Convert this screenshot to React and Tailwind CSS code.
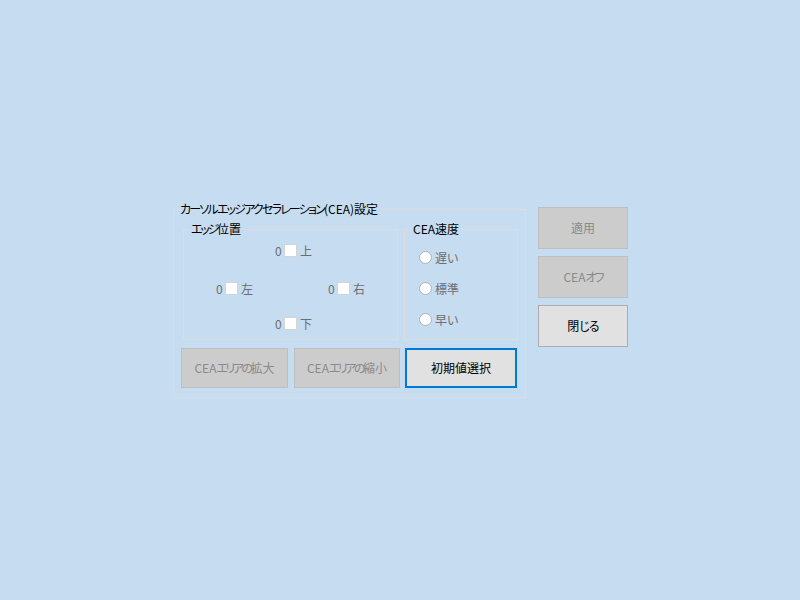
import React from "react";

const font = "font-['Noto_Sans_CJK_JP','Noto_Sans',sans-serif] [font-feature-settings:'palt']";

// kana runs are narrower in the Windows UI font, squeeze them a little
function K({ children, t = "tracking-[-1.8px]" }) {
  return <span className={t}>{children}</span>;
}

function EdgeBox({ label }) {
  return (
    <div className="flex items-center h-[13px]">
      <span className="text-[12px] leading-[13px] text-[#6e6e6e] w-[9px]">0</span>
      <span className="w-[13px] h-[13px] bg-white border border-[#d4d4d4]" />
      <span className="ml-[3px] text-[12px] leading-[13px] text-[#6e6e6e]">{label}</span>
    </div>
  );
}

function Radio({ label }) {
  return (
    <div className="flex items-center h-[13px]">
      <span className="w-[13px] h-[13px] rounded-full bg-white border border-[#a9b4c0]" />
      <span className="ml-[3px] text-[12px] leading-[13px] text-[#6e6e6e]">{label}</span>
    </div>
  );
}

function Btn({ children, disabled, focused, className = "" }) {
  let tone = "bg-[#e1e1e1] border border-[#adadad] text-black";
  if (disabled) tone = "bg-[#cccccc] border border-[#bfbfbf] text-[#8a8a8a]";
  if (focused) tone = "bg-[#e1e1e1] border-2 border-[#0078d7] text-black";
  return (
    <div className={`flex items-center justify-center text-[12px] ${tone} ${className}`}>
      {children}
    </div>
  );
}

export default function App() {
  return (
    <div className={`w-[800px] h-[600px] bg-[#c6dcf0] pt-[201px] pl-[173px] flex items-start gap-[12px] ${font}`}>
      <fieldset className="w-[353px] h-[197px] border border-[#dcdcdc] px-[7px]">
        <legend className="ml-[-2px] px-[1px] text-[12px] leading-[16px] text-black">
          <K>カーソルエッジアクセラレーション</K>(CEA)設定
        </legend>
        <div className="flex mt-[4px] ml-[2px] gap-[6px]">
          <fieldset className="w-[215px] h-[119px] border border-[#dcdcdc]">
            <legend className="ml-[6px] px-[1px] text-[12px] leading-[16px] text-black">
              <K t="tracking-[-2.2px]">エッジ</K>位置
            </legend>
            <div className="flex flex-col pt-[7px]">
              <div className="pl-[91px]">
                <EdgeBox label="上" />
              </div>
              <div className="flex pl-[32px] mt-[25px]">
                <div className="w-[112px]">
                  <EdgeBox label="左" />
                </div>
                <EdgeBox label="右" />
              </div>
              <div className="pl-[91px] mt-[22px]">
                <EdgeBox label="下" />
              </div>
            </div>
          </fieldset>
          <fieldset className="w-[114px] h-[119px] border border-[#dcdcdc]">
            <legend className="ml-[7px] px-[1px] text-[12px] leading-[16px] text-black">CEA速度</legend>
            <div className="flex flex-col pt-[14px] pl-[14px] gap-[18px]">
              <Radio label="遅い" />
              <Radio label="標準" />
              <Radio label="早い" />
            </div>
          </fieldset>
        </div>
        <div className="flex mt-[8px]">
          <Btn disabled className="w-[107px] h-[40px]">
            CEA<K t="tracking-[-2.5px]">エリアの</K>拡大
          </Btn>
          <Btn disabled className="w-[106px] h-[40px] ml-[6px]">
            CEA<K t="tracking-[-2.5px]">エリアの</K>縮小
          </Btn>
          <Btn focused className="w-[112px] h-[40px] ml-[5px]">初期値選択</Btn>
        </div>
      </fieldset>
      <div className="flex flex-col gap-[7px] mt-[6px]">
        <Btn disabled className="w-[90px] h-[42px]">適用</Btn>
        <Btn disabled className="w-[90px] h-[42px]">
          CEA<K t="tracking-[-2px]">オフ</K>
        </Btn>
        <Btn className="w-[90px] h-[42px]">
          閉<K t="tracking-[-1px]">じる</K>
        </Btn>
      </div>
    </div>
  );
}
